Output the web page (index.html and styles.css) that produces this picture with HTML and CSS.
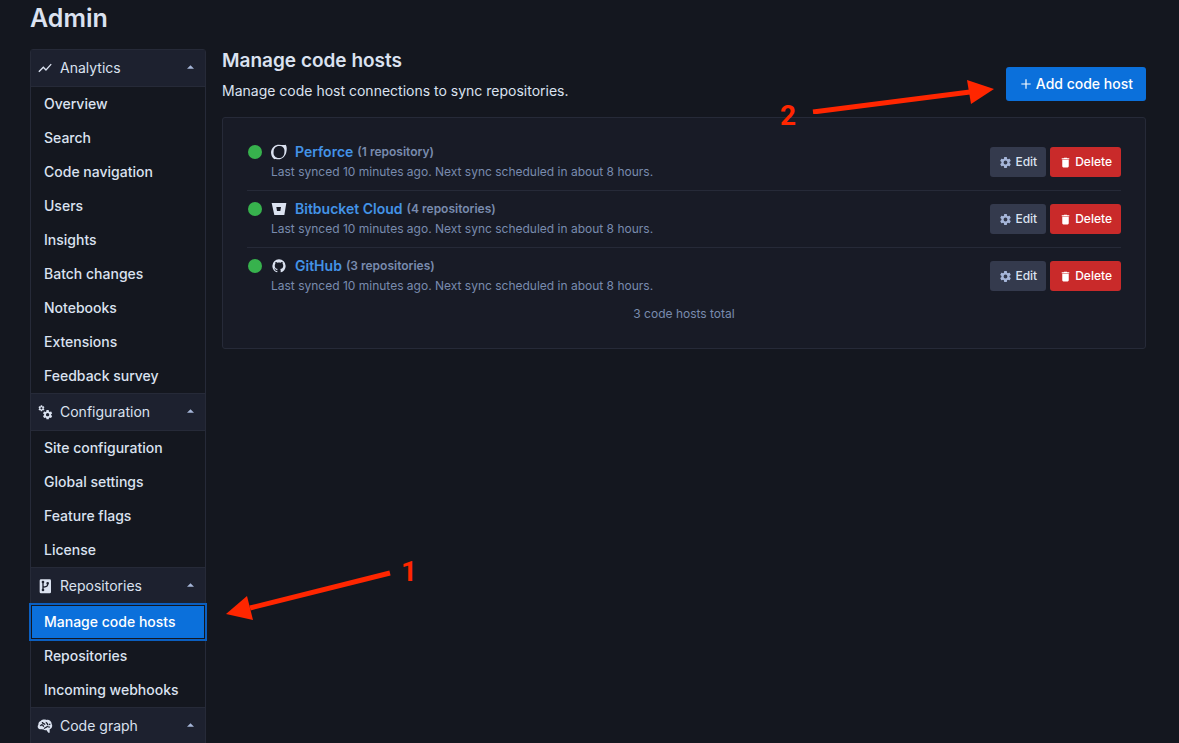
FILE: index.html
```html
<!DOCTYPE html>
<html lang="en">
<head>
    <meta charset="UTF-8">
    <meta name="viewport" content="width=device-width, initial-scale=1.0">
    <title>Manage code hosts - Admin</title>
    <link rel="stylesheet" href="styles.css">
</head>
<body>
    <!-- Shared icons -->
    <svg class="sprite" aria-hidden="true">
        <symbol id="chart" viewBox="0 0 24 24"><path d="M3.5,18.49L9.5,12.48L13.5,16.48L22,6.92L20.59,5.51L13.5,13.48L9.5,9.48L2,16.99L3.5,18.49Z"/></symbol>
        <symbol id="cogs" viewBox="0 0 24 24"><path d="M15.9,18.45C17.25,18.45 18.35,17.35 18.35,16C18.35,14.65 17.25,13.55 15.9,13.55C14.54,13.55 13.45,14.65 13.45,16C13.45,17.35 14.54,18.45 15.9,18.45M21.1,16.68L22.58,17.84C22.71,17.95 22.75,18.13 22.66,18.29L21.26,20.71C21.17,20.86 21,20.92 20.83,20.86L19.09,20.16C18.73,20.44 18.33,20.67 17.91,20.85L17.64,22.7C17.62,22.87 17.47,23 17.3,23H14.5C14.32,23 14.18,22.87 14.15,22.7L13.89,20.85C13.46,20.67 13.07,20.44 12.71,20.16L10.96,20.86C10.81,20.92 10.62,20.86 10.54,20.71L9.14,18.29C9.05,18.13 9.09,17.95 9.22,17.84L10.7,16.68L10.65,16L10.7,15.31L9.22,14.16C9.09,14.05 9.05,13.86 9.14,13.71L10.54,11.29C10.62,11.13 10.81,11.07 10.96,11.13L12.71,11.84C13.07,11.56 13.46,11.32 13.89,11.15L14.15,9.29C14.18,9.13 14.32,9 14.5,9H17.3C17.47,9 17.62,9.13 17.64,9.29L17.91,11.15C18.33,11.32 18.73,11.56 19.09,11.84L20.83,11.13C21,11.07 21.17,11.13 21.26,11.29L22.66,13.71C22.75,13.86 22.71,14.05 22.58,14.16L21.1,15.31L21.15,16L21.1,16.68M6.69,8.07C7.56,8.07 8.26,7.37 8.26,6.5C8.26,5.63 7.56,4.92 6.69,4.92C5.82,4.92 5.11,5.63 5.11,6.5C5.11,7.37 5.82,8.07 6.69,8.07M10.03,6.94L11,7.68C11.07,7.75 11.09,7.87 11.03,7.97L10.13,9.53C10.08,9.63 9.96,9.67 9.86,9.63L8.74,9.18L8,9.62L7.81,10.81C7.79,10.92 7.7,11 7.59,11H5.79C5.67,11 5.58,10.92 5.56,10.81L5.4,9.62L4.64,9.18L3.5,9.63C3.41,9.67 3.3,9.63 3.24,9.53L2.34,7.97C2.28,7.87 2.31,7.75 2.39,7.68L3.34,6.94L3.31,6.5L3.34,6.06L2.39,5.32C2.31,5.25 2.28,5.13 2.34,5.03L3.24,3.47C3.3,3.37 3.41,3.33 3.5,3.37L4.63,3.82L5.4,3.38L5.56,2.19C5.58,2.08 5.67,2 5.79,2H7.59C7.7,2 7.79,2.08 7.81,2.19L8,3.38L8.74,3.82L9.86,3.37C9.96,3.33 10.08,3.37 10.13,3.47L11.03,5.03C11.09,5.13 11.07,5.25 11,5.32L10.03,6.06L10.06,6.5L10.03,6.94Z"/></symbol>
        <symbol id="repo" viewBox="0 0 24 24">
            <rect x="4" y="2" width="17" height="21" rx="2"/>
            <g fill="none" stroke="#1d212f" stroke-width="2"><circle cx="9" cy="6" r="1"/><circle cx="16" cy="8" r="1"/><circle cx="9" cy="18" r="1"/><path d="M9 7v10M9 14c5-1 7-1 7-5"/></g>
        </symbol>
        <symbol id="brain" viewBox="0 0 24 24">
            <path d="M6 4C8 2 12 2 14 3C18 2 22 5 22 9C24 12 22 16 19 17V22H17L14 18C12 19 9 18 8 17H4C1 16 0 12 2 10C2 7 3 5 6 4Z"/>
            <path d="M8 6C8 9 11 8 12 10M5 12C7 9 9 10 10 13M11 16C12 13 15 15 16 12M14 6C13 8 17 8 16 11M20 9L18 10M19 14L17 13" fill="none" stroke="#1d212f" stroke-width="2"/>
        </symbol>
        <symbol id="caret" viewBox="0 0 8 4"><path d="M0 4L4 0L8 4Z"/></symbol>
        <symbol id="plus" viewBox="0 0 24 24"><path d="M20,13H13V20H11V13H4V11H11V4H13V11H20V13Z"/></symbol>
        <symbol id="cog" viewBox="0 0 24 24"><path d="M12,15.5A3.5,3.5 0 0,1 8.5,12A3.5,3.5 0 0,1 12,8.5A3.5,3.5 0 0,1 15.5,12A3.5,3.5 0 0,1 12,15.5M19.43,12.97C19.47,12.65 19.5,12.33 19.5,12C19.5,11.67 19.47,11.34 19.43,11L21.54,9.37C21.73,9.22 21.78,8.95 21.66,8.73L19.66,5.27C19.54,5.05 19.27,4.96 19.05,5.05L16.56,6.05C16.04,5.66 15.5,5.32 14.87,5.07L14.5,2.42C14.46,2.18 14.25,2 14,2H10C9.75,2 9.54,2.18 9.5,2.42L9.13,5.07C8.5,5.32 7.96,5.66 7.44,6.05L4.95,5.05C4.73,4.96 4.46,5.05 4.34,5.27L2.34,8.73C2.21,8.95 2.27,9.22 2.46,9.37L4.57,11C4.53,11.34 4.5,11.67 4.5,12C4.5,12.33 4.53,12.65 4.57,12.97L2.46,14.63C2.27,14.78 2.21,15.05 2.34,15.27L4.34,18.73C4.46,18.95 4.73,19.03 4.95,18.95L7.44,17.94C7.96,18.34 8.5,18.68 9.13,18.93L9.5,21.58C9.54,21.82 9.75,22 10,22H14C14.25,22 14.46,21.82 14.5,21.58L14.87,18.93C15.5,18.67 16.04,18.34 16.56,17.94L19.05,18.95C19.27,19.03 19.54,18.95 19.66,18.73L21.66,15.27C21.78,15.05 21.73,14.78 21.54,14.63L19.43,12.97Z"/></symbol>
        <symbol id="trash" viewBox="0 0 24 24"><path d="M19,4H15.5L14.5,3H9.5L8.5,4H5V6H19M6,19A2,2 0 0,0 8,21H16A2,2 0 0,0 18,19V7H6V19Z"/></symbol>
        <symbol id="perforce" viewBox="0 0 24 24"><path fill-rule="evenodd" d="M12 1C16 1 19 2 22 1C24 4 24 8 23 12C22 18 17 23 11 23C8 23 7 22 5 23L3 21C1 19 0 15 0 12C1 5 6 1 12 1ZM14 3C8 2 4 6 4 11C3 17 6 20 10 21C16 22 20 18 20 13C21 8 19 4 14 3Z"/></symbol>
        <symbol id="bitbucket" viewBox="0 0 24 24"><path fill-rule="evenodd" d="M1 3H23L20 21H5ZM8 9L9 15H14L15 9Z"/></symbol>
        <symbol id="github" viewBox="0 0 24 24"><path d="M12,2A10,10 0 0,0 2,12C2,16.42 4.87,20.17 8.84,21.5C9.34,21.58 9.5,21.27 9.5,21C9.5,20.77 9.5,20.14 9.5,19.31C6.73,19.91 6.14,17.97 6.14,17.97C5.68,16.81 5.03,16.5 5.03,16.5C4.12,15.88 5.1,15.9 5.1,15.9C6.1,15.97 6.63,16.93 6.63,16.93C7.5,18.45 8.97,18 9.54,17.76C9.63,17.11 9.89,16.67 10.17,16.42C7.95,16.17 5.62,15.31 5.62,11.5C5.62,10.39 6,9.5 6.65,8.79C6.55,8.54 6.2,7.5 6.75,6.15C6.75,6.15 7.59,5.88 9.5,7.17C10.29,6.95 11.15,6.84 12,6.84C12.85,6.84 13.71,6.95 14.5,7.17C16.41,5.88 17.25,6.15 17.25,6.15C17.8,7.5 17.45,8.54 17.35,8.79C18,9.5 18.38,10.39 18.38,11.5C18.38,15.32 16.04,16.16 13.81,16.41C14.17,16.72 14.5,17.33 14.5,18.26C14.5,19.6 14.5,20.68 14.5,21C14.5,21.27 14.66,21.59 15.17,21.5C19.14,20.16 22,16.42 22,12A10,10 0 0,0 12,2Z"/></symbol>
    </svg>

    <div class="page">
        <h1>Admin</h1>
        <div class="layout">
            <nav class="sidebar">
                <button class="group-header"><svg class="icon"><use href="#chart"/></svg>Analytics<svg class="caret"><use href="#caret"/></svg></button>
                <a href="#" class="nav-item">Overview</a>
                <a href="#" class="nav-item">Search</a>
                <a href="#" class="nav-item">Code navigation</a>
                <a href="#" class="nav-item">Users</a>
                <a href="#" class="nav-item">Insights</a>
                <a href="#" class="nav-item">Batch changes</a>
                <a href="#" class="nav-item">Notebooks</a>
                <a href="#" class="nav-item">Extensions</a>
                <a href="#" class="nav-item">Feedback survey</a>
                <button class="group-header"><svg class="icon"><use href="#cogs"/></svg>Configuration<svg class="caret"><use href="#caret"/></svg></button>
                <a href="#" class="nav-item">Site configuration</a>
                <a href="#" class="nav-item">Global settings</a>
                <a href="#" class="nav-item">Feature flags</a>
                <a href="#" class="nav-item">License</a>
                <button class="group-header"><svg class="icon"><use href="#repo"/></svg>Repositories<svg class="caret"><use href="#caret"/></svg></button>
                <div class="active-row">
                    <a href="#" class="nav-item active">Manage code hosts</a>
                    <div class="note note-one">
                        <svg width="166" height="52" viewBox="0 0 166 52"><path d="M24 40L164 5" stroke-width="5"/><path class="head" d="M0 46L21 28L27 52Z"/></svg>
                        <span>1</span>
                    </div>
                </div>
                <a href="#" class="nav-item">Repositories</a>
                <a href="#" class="nav-item">Incoming webhooks</a>
                <button class="group-header"><svg class="icon"><use href="#brain"/></svg>Code graph<svg class="caret"><use href="#caret"/></svg></button>
            </nav>

            <main>
                <header class="page-header">
                    <div>
                        <h2>Manage code hosts</h2>
                        <p>Manage code host connections to sync repositories.</p>
                    </div>
                    <button class="btn btn-primary"><svg class="icon"><use href="#plus"/></svg>Add code host</button>
                    <div class="note note-two">
                        <span>2</span>
                        <svg width="182" height="34" viewBox="0 0 182 34"><path d="M1 32L158 12" stroke-width="5"/><path class="head" d="M182 9L155 0L159 24Z"/></svg>
                    </div>
                </header>

                <section class="card">
                    <ul class="hosts">
                        <li>
                            <span class="dot"></span>
                            <div class="info">
                                <div class="title"><svg class="icon"><use href="#perforce"/></svg><a href="#">Perforce</a><span class="count">(1 repository)</span></div>
                                <div class="sync">Last synced 10 minutes ago. Next sync scheduled in about 8 hours.</div>
                            </div>
                            <button class="btn btn-sm btn-secondary"><svg class="icon"><use href="#cog"/></svg>Edit</button>
                            <button class="btn btn-sm btn-danger"><svg class="icon"><use href="#trash"/></svg>Delete</button>
                        </li>
                        <li>
                            <span class="dot"></span>
                            <div class="info">
                                <div class="title"><svg class="icon"><use href="#bitbucket"/></svg><a href="#">Bitbucket Cloud</a><span class="count">(4 repositories)</span></div>
                                <div class="sync">Last synced 10 minutes ago. Next sync scheduled in about 8 hours.</div>
                            </div>
                            <button class="btn btn-sm btn-secondary"><svg class="icon"><use href="#cog"/></svg>Edit</button>
                            <button class="btn btn-sm btn-danger"><svg class="icon"><use href="#trash"/></svg>Delete</button>
                        </li>
                        <li>
                            <span class="dot"></span>
                            <div class="info">
                                <div class="title"><svg class="icon"><use href="#github"/></svg><a href="#">GitHub</a><span class="count">(3 repositories)</span></div>
                                <div class="sync">Last synced 10 minutes ago. Next sync scheduled in about 8 hours.</div>
                            </div>
                            <button class="btn btn-sm btn-secondary"><svg class="icon"><use href="#cog"/></svg>Edit</button>
                            <button class="btn btn-sm btn-danger"><svg class="icon"><use href="#trash"/></svg>Delete</button>
                        </li>
                    </ul>
                    <p class="total">3 code hosts total</p>
                </section>
            </main>
        </div>
    </div>
</body>
</html>
```
FILE: styles.css
```css
* {
    box-sizing: border-box;
}
body {
    margin: 0;
    height: 100vh;
    overflow: hidden;
    background-color: #14171f;
    color: #dbe2f0;
    font-family: Inter, "Liberation Sans", sans-serif;
    font-size: 14px;
    line-height: 20px;
}
h1, h2, p, ul {
    margin: 0;
    padding: 0;
}
h1 {
    font-size: 25px;
    font-weight: 600;
    line-height: 36px;
    margin-bottom: 13px;
}
h2 {
    font-size: 19px;
    font-weight: 600;
    line-height: 24px;
    margin-bottom: 8px;
}
a {
    text-decoration: none;
}
button {
    font: inherit;
    border: none;
    cursor: pointer;
}
.sprite {
    position: absolute;
    width: 0;
    height: 0;
}
.icon {
    width: 16px;
    height: 16px;
    fill: currentColor;
    flex: none;
}
.page {
    padding: 0 33px 0 30px;
}
.layout {
    display: flex;
    align-items: flex-start;
    gap: 16px;
}

/* Sidebar */
.sidebar {
    width: 176px;
    flex: none;
    border: 1px solid #262a38;
    border-radius: 3px;
}
.group-header {
    display: flex;
    align-items: center;
    gap: 7px;
    width: 100%;
    height: 38px;
    padding: 0 11px 0 6px;
    background-color: #1d212f;
    color: #dbe2f0;
    border-top: 1px solid #262a38;
    border-bottom: 1px solid #262a38;
}
.group-header:first-child {
    height: 37px;
    border-top: none;
}
.caret {
    width: 7px;
    height: 4px;
    margin-left: auto;
    margin-bottom: 2px;
    fill: #a6b6d9;
}
.nav-item {
    display: block;
    padding: 7px 13px;
    color: #dbe2f0;
    font-weight: 500;
}
.active-row {
    position: relative;
}
.nav-item.active {
    background-color: #0b70db;
    color: #fff;
    outline: 2px solid #0b5fc0;
    box-shadow: inset 0 0 0 1px #14171f;
}

/* Main column */
main {
    flex: 1;
    min-width: 0;
}
.page-header {
    position: relative;
    display: flex;
    justify-content: space-between;
    align-items: center;
    margin-bottom: 16px;
}
.btn {
    display: flex;
    align-items: center;
    gap: 3px;
    height: 34px;
    padding: 0 13px;
    border-radius: 3px;
    color: #fff;
    font-weight: 500;
}
.btn-primary {
    background-color: #0b70db;
    margin-top: 18px;
}
.btn-primary .icon {
    width: 14px;
    height: 14px;
}
.btn-sm {
    height: 30px;
    padding: 0 9px;
    font-size: 12px;
    margin-left: 4px;
}
.btn-sm .icon {
    width: 13px;
    height: 13px;
}
.btn-secondary {
    background-color: #343a4d;
    color: #dbe2f0;
}
.btn-secondary .icon {
    color: #a6b6d9;
}
.btn-danger {
    background-color: #c92a2a;
}
.card {
    padding: 16px 24px 24px;
    background-color: #181b26;
    border: 1px solid #262a38;
    border-radius: 3px;
}
.hosts {
    list-style: none;
}
.hosts li {
    display: flex;
    align-items: center;
    height: 57px;
    border-bottom: 1px solid #262a38;
}
.hosts li:last-child {
    height: 56px;
    border-bottom: none;
}
.dot {
    width: 14px;
    height: 14px;
    margin: 0 9px 20px 1px;
    border-radius: 50%;
    background-color: #37b24d;
}
.info {
    flex: 1;
}
.title {
    display: flex;
    align-items: center;
}
.title a {
    margin: 0 4px 0 8px;
    color: #4393e7;
    font-weight: 600;
}
.count {
    color: #798bae;
    font-size: 12px;
    font-weight: 600;
}
.sync, .total {
    color: #798bae;
    font-size: 12px;
}
.total {
    text-align: center;
}

/* Red walkthrough arrows */
.note {
    position: absolute;
    display: flex;
    color: #ff2600;
    font: bold 28px/28px Roboto, "Liberation Sans", sans-serif;
}
.note path {
    stroke: #ff2600;
}
.note .head {
    fill: #ff2600;
    stroke: none;
}
.note-one {
    top: -47px;
    left: 195px;
    gap: 9px;
}
.note-one svg {
    margin-top: 10px;
}
.note-two {
    top: 31px;
    right: 152px;
    gap: 16px;
}
.note-two span {
    margin-top: 22px;
}
```
